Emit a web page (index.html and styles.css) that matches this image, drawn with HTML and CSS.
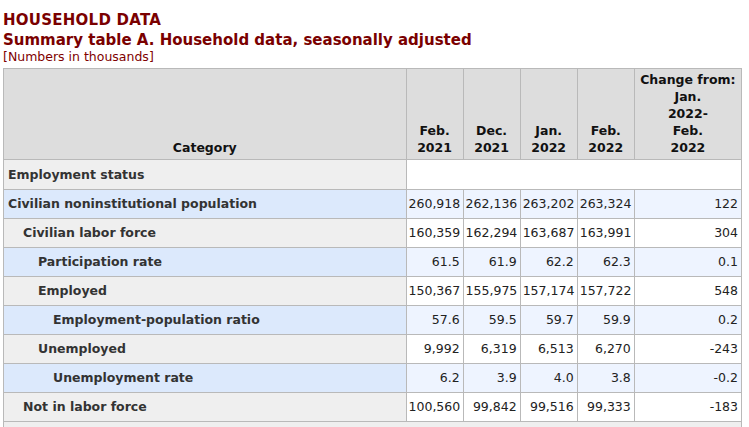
FILE: index.html
```html
<!DOCTYPE html>
<html>
<head>
<meta charset="utf-8">
<link rel="stylesheet" href="styles.css">
</head>
<body>
<div class="page">
  <div class="title">HOUSEHOLD DATA</div>
  <div class="subtitle">Summary table A. Household data, seasonally adjusted</div>
  <div class="note">[Numbers in thousands]</div>
  <table class="data">
    <colgroup>
      <col class="c-cat">
      <col class="c-num">
      <col class="c-num">
      <col class="c-num">
      <col class="c-num">
      <col class="c-chg">
    </colgroup>
    <thead>
      <tr>
        <th>Category</th>
        <th>Feb.<br>2021</th>
        <th>Dec.<br>2021</th>
        <th>Jan.<br>2022</th>
        <th>Feb.<br>2022</th>
        <th>Change from:<br>Jan.<br>2022-<br>Feb.<br>2022</th>
      </tr>
    </thead>
    <tbody>
      <tr class="gray first">
        <th class="lvl0">Employment status</th>
        <td colspan="5" class="blank"></td>
      </tr>
      <tr class="blue">
        <th class="lvl0">Civilian noninstitutional population</th>
        <td>260,918</td><td>262,136</td><td>263,202</td><td>263,324</td><td>122</td>
      </tr>
      <tr class="gray">
        <th class="lvl1">Civilian labor force</th>
        <td>160,359</td><td>162,294</td><td>163,687</td><td>163,991</td><td>304</td>
      </tr>
      <tr class="blue">
        <th class="lvl2">Participation rate</th>
        <td>61.5</td><td>61.9</td><td>62.2</td><td>62.3</td><td>0.1</td>
      </tr>
      <tr class="gray">
        <th class="lvl2">Employed</th>
        <td>150,367</td><td>155,975</td><td>157,174</td><td>157,722</td><td>548</td>
      </tr>
      <tr class="blue">
        <th class="lvl3">Employment-population ratio</th>
        <td>57.6</td><td>59.5</td><td>59.7</td><td>59.9</td><td>0.2</td>
      </tr>
      <tr class="gray">
        <th class="lvl2">Unemployed</th>
        <td>9,992</td><td>6,319</td><td>6,513</td><td>6,270</td><td>-243</td>
      </tr>
      <tr class="blue">
        <th class="lvl3">Unemployment rate</th>
        <td>6.2</td><td>3.9</td><td>4.0</td><td>3.8</td><td>-0.2</td>
      </tr>
      <tr class="gray">
        <th class="lvl1">Not in labor force</th>
        <td>100,560</td><td>99,842</td><td>99,516</td><td>99,333</td><td>-183</td>
      </tr>
    </tbody>
    <tfoot>
      <tr>
        <td colspan="6" class="foot"></td>
      </tr>
    </tfoot>
  </table>
</div>
</body>
</html>
```
FILE: styles.css
```css
html, body {
  margin: 0;
  padding: 0;
  background: #ffffff;
}
body {
  font-family: "DejaVu Sans", Verdana, sans-serif;
  color: #222222;
}
.page {
  padding: 10px 0 0 3px;
}
.title, .subtitle {
  color: #7a0000;
  font-weight: bold;
  font-size: 15px;
  line-height: 20px;
}
.title {
  letter-spacing: 0.25px;
}
.note {
  color: #800000;
  font-size: 12.5px;
  line-height: 14px;
  margin-bottom: 4px;
}
table.data {
  border-collapse: collapse;
  table-layout: fixed;
  width: 739px;
  font-size: 12.5px;
  line-height: 17px;
}
.c-cat { width: 402px; }
.c-num { width: 57px; }
.c-chg { width: 107px; }
table.data th,
table.data td {
  border: 1px solid #b9b9b9;
}
thead th {
  background: #dddddd;
  color: #111111;
  font-weight: bold;
  text-align: center;
  vertical-align: bottom;
  padding: 2px 1px 3px;
  white-space: nowrap;
}
tbody th {
  text-align: left;
  font-weight: bold;
  color: #333333;
  padding: 5px 3px 6px 4px;
  white-space: nowrap;
}
tbody td {
  text-align: right;
  padding: 5px 3px 6px 2px;
  white-space: nowrap;
  color: #222222;
}
tr.first th,
tr.first td {
  padding-top: 6px;
}
tr.gray th { background: #efefef; }
tr.gray td { background: #ffffff; }
tr.blue th { background: #dce9fc; }
tr.blue td { background: #eef4ff; }
td.blank { background: #ffffff; }
th.lvl0 { padding-left: 4px; }
th.lvl1 { padding-left: 19px; }
th.lvl2 { padding-left: 34px; }
th.lvl3 { padding-left: 49px; }
tfoot td.foot {
  background: #efefef;
  height: 30px;
  padding: 0;
}
```
